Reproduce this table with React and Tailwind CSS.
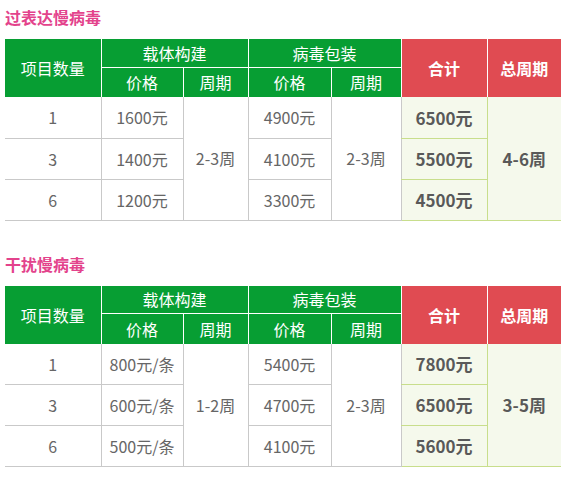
const tables = [
  {
    title: '过表达慢病毒',
    rows: [
      { n: '1', vp: '1600元', pp: '4900元', total: '6500元' },
      { n: '3', vp: '1400元', pp: '4100元', total: '5500元' },
      { n: '6', vp: '1200元', pp: '3300元', total: '4500元' },
    ],
    vCycle: '2-3周',
    pCycle: '2-3周',
    allCycle: '4-6周',
  },
  {
    title: '干扰慢病毒',
    rows: [
      { n: '1', vp: '800元/条', pp: '5400元', total: '7800元' },
      { n: '3', vp: '600元/条', pp: '4700元', total: '6500元' },
      { n: '6', vp: '500元/条', pp: '4100元', total: '5600元' },
    ],
    vCycle: '1-2周',
    pCycle: '2-3周',
    allCycle: '3-5周',
  },
];

function PriceTable({ data }) {
  const body = 'border-b border-[#c9c9c9] text-center text-[16px] text-[#666]';
  return (
    <div className="mb-[26px]">
      <h3 className="h-[39px] pt-[4px] text-[16px] leading-[26px] font-bold text-[#e3438c]">{data.title}</h3>
      <table className="w-[556px] table-fixed border-collapse">
        <colgroup>
          <col className="w-[96px]" />
          <col className="w-[82px]" />
          <col className="w-[65px]" />
          <col className="w-[83px]" />
          <col className="w-[70px]" />
          <col className="w-[86px]" />
          <col className="w-[74px]" />
        </colgroup>
        <thead className="text-[16px] font-normal text-white">
          <tr className="h-[28px]">
            <th rowSpan={2} className="border-r border-white bg-[#079e33] font-normal">项目数量</th>
            <th colSpan={2} className="border-r border-b border-white bg-[#079e33] font-normal">载体构建</th>
            <th colSpan={2} className="border-r border-b border-white bg-[#079e33] font-normal">病毒包装</th>
            <th rowSpan={2} className="border-r border-white bg-[#e04b52] font-bold">合计</th>
            <th rowSpan={2} className="bg-[#e04b52] font-bold">总周期</th>
          </tr>
          <tr className="h-[30px]">
            <th className="border-r border-white bg-[#079e33] font-normal">价格</th>
            <th className="border-r border-white bg-[#079e33] font-normal">周期</th>
            <th className="border-r border-white bg-[#079e33] font-normal">价格</th>
            <th className="border-r border-white bg-[#079e33] font-normal">周期</th>
          </tr>
        </thead>
        <tbody>
          {data.rows.map((r, i) => (
            <tr key={r.n} className="h-[41px]">
              <td className={body}>{r.n}</td>
              <td className={`${body} border-l`}>{r.vp}</td>
              {i === 0 && (
                <td rowSpan={3} className={`${body} border-l`}>{data.vCycle}</td>
              )}
              <td className={`${body} border-l`}>{r.pp}</td>
              {i === 0 && (
                <td rowSpan={3} className={`${body} border-l`}>{data.pCycle}</td>
              )}
              <td className="border-l border-l-[#c9c9c9] border-b border-b-[#c8de8c] bg-[#f5f9ec] text-center text-[17px] font-bold text-[#595959]">
                {r.total}
              </td>
              {i === 0 && (
                <td rowSpan={3} className="border-l border-b border-[#c8de8c] bg-[#f5f9ec] text-center text-[17px] font-bold text-[#595959]">
                  {data.allCycle}
                </td>
              )}
            </tr>
          ))}
        </tbody>
      </table>
    </div>
  );
}

export default function App() {
  return (
    <div className="w-[564px] h-[481px] bg-white px-[5px] font-['Noto_Sans_CJK_SC','Noto_Sans',sans-serif] overflow-hidden">
      {tables.map((t) => (
        <PriceTable key={t.title} data={t} />
      ))}
    </div>
  );
}
